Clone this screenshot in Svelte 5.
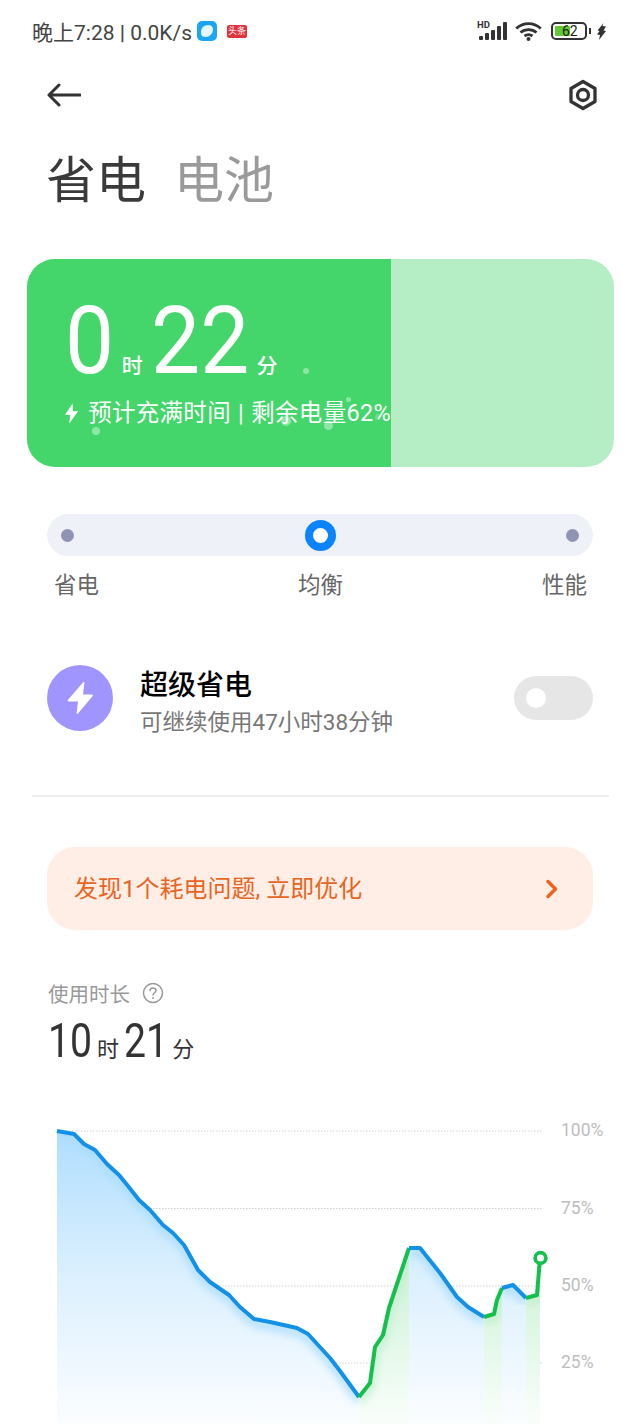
<script>
	const blue = '#1391e8';
	const green = '#14bf4c';

	// chart line pieces, in page coordinates
	const segments = [
		{ color: blue, pts: [[57,1131],[74,1134],[84,1144],[95,1150],[107,1164],[119,1175],[128,1186],[139,1200],[150,1210],[163,1225],[173,1233],[184,1245],[198,1270],[210,1282],[229,1295],[240,1307],[254,1319],[270,1322],[297,1328],[308,1334],[330,1358],[340,1371],[359,1397]] },
		{ color: green, pts: [[359,1397],[370,1383],[375,1347],[383,1335],[389,1308],[409,1248]] },
		{ color: blue, pts: [[409,1248],[420,1248],[440,1273],[457,1297],[468,1307],[484,1317]] },
		{ color: green, pts: [[484,1317],[494,1314],[497,1300],[502,1288]] },
		{ color: blue, pts: [[502,1288],[513,1285],[526,1298]] },
		{ color: green, pts: [[526,1298],[537,1295],[540,1258]] }
	];

	const bottom = 1424;
	const line = (pts) => pts.map((p) => p.join(',')).join(' ');
	const area = (pts) =>
		`${pts[0][0]},${bottom} ${line(pts)} ${pts[pts.length - 1][0]},${bottom}`;

	const grid = [
		{ y: 1131, label: '100%' },
		{ y: 1208.5, label: '75%' },
		{ y: 1286, label: '50%' },
		{ y: 1363, label: '25%' }
	];

	const bubbles = [
		{ x: 69, y: 172, r: 4, a: 0.4 },
		{ x: 279, y: 112, r: 3, a: 0.4 },
		{ x: 259, y: 162, r: 5, a: 0.4 },
		{ x: 301, y: 166, r: 4.5, a: 0.4 },
		{ x: 321, y: 140, r: 2.5, a: 0.4 },
		{ x: 351, y: 158, r: 3, a: 0.2 }
	];
</script>

<div class="page">
	<div class="status">
		<span class="clock">晚上7:28 <b>|</b> 0.0K/s</span>
		<svg class="app" width="20" height="20" viewBox="0 0 20 20">
			<rect width="20" height="20" rx="5" fill="#1aa5f5" />
			<path d="M11 4c3 0 5 1.500 5 4.500 0 4-3.500 7.500-7.500 7.500-1.200 0-2.500-.3-3.500-1-.8-1.200-1-2.500-1-4C4 7 7 4 11 4z" fill="#e6f6ff" />
		</svg>
		<span class="news">头条</span>
		<span class="grow"></span>
		<span class="signal">
			<span class="hd">HD</span>
			<svg width="29" height="18" viewBox="0 0 29 18">
				<rect x="1" y="14" width="4" height="4" rx="1" fill="#333" />
				<rect x="7" y="11" width="4" height="7" rx="1" fill="#333" />
				<rect x="13" y="8" width="4" height="10" rx="1" fill="#333" />
				<rect x="19" y="4" width="4" height="14" rx="1" fill="#333" />
				<rect x="25" y="0" width="4" height="18" rx="1" fill="#333" />
			</svg>
		</span>
		<svg class="wifi" width="27" height="19" viewBox="0 0 27 19" fill="none" stroke="#333" stroke-width="2.800">
			<path d="M1.200 6.500C8.500 0 18.500 0 25.800 6.500" />
			<path d="M5.500 10.500C10 6.700 17 6.700 21.500 10.500" />
			<path d="M9.500 14C12 12.300 15 12.300 17.500 14" />
			<circle cx="13.500" cy="17" r="2" fill="#333" stroke="none" />
		</svg>
		<span class="battery">
			<span class="level"></span>
			<span class="pct">62</span>
		</span>
		<span class="nub"></span>
		<svg class="charge" width="9" height="17" viewBox="0 0 9 17">
			<path d="M6.500 0 .5 7.500l2 .5L0 11.500l3 .5L2 17l7-9-2.500-.5L9 3.500 5.500 3z" fill="#333" />
		</svg>
	</div>

	<div class="nav">
		<svg width="34" height="24" viewBox="0 0 34 24" fill="none" stroke="#333" stroke-width="3" stroke-linecap="round" stroke-linejoin="round">
			<path d="M33 12H2M12 2 2 12l10 10" />
		</svg>
		<svg width="32" height="32" viewBox="0 0 32 32" fill="none" stroke="#333" stroke-width="3.300" stroke-linejoin="round">
			<path d="M16 2.500 28 9.500v13L16 29.500 4 22.500v-13z" />
			<circle cx="16" cy="16" r="5.500" />
		</svg>
	</div>

	<div class="tabs">
		<span class="tab on">省电</span>
		<span class="tab">电池</span>
	</div>

	<div class="card">
		<div class="fill">
			{#each bubbles as b}
				<span class="bubble" style="left:{b.x - b.r}px;top:{b.y - b.r}px;width:{b.r * 2}px;height:{b.r * 2}px;opacity:{b.a}"></span>
			{/each}
			<div class="time">
				<span class="big one">0</span><span class="unit">时</span><span class="big two">22</span><span class="unit">分</span>
			</div>
			<div class="estimate">
				<svg width="14" height="21" viewBox="0 0 14 21">
					<path d="M8 0 0 12h5.500L4.500 21 14 8H8.500z" fill="#fff" />
				</svg>
				<span>预计充满时间 | 剩余电量62%</span>
			</div>
		</div>
	</div>

	<div class="track">
		<span class="stop"></span>
		<span class="knob"></span>
		<span class="stop"></span>
	</div>
	<div class="modes">
		<span>省电</span>
		<span>均衡</span>
		<span>性能</span>
	</div>

	<div class="saver">
		<span class="badge">
			<svg width="28" height="34" viewBox="0 0 28 34">
				<path d="M17 1.500c.5-.8 1.500-.4 1.400.5L17 13.500h9c.8 0 1.200.8.700 1.500L12 32.500c-.5.700-1.500.3-1.400-.5l1.400-11.500H2.500c-.8 0-1.200-.8-.7-1.500z" fill="#fff" />
			</svg>
		</span>
		<div class="saver-text">
			<div class="saver-title">超级省电</div>
			<div class="saver-sub">可继续使用47小时38分钟</div>
		</div>
		<span class="toggle"><span class="dot"></span></span>
	</div>

	<div class="rule"></div>

	<div class="notice">
		<span>发现1个耗电问题, 立即优化</span>
		<svg width="14" height="20" viewBox="0 0 14 20" fill="none" stroke="#ea6419" stroke-width="3.500" stroke-linecap="round" stroke-linejoin="round">
			<path d="M3 2.500 10.500 10 3 17.500" />
		</svg>
	</div>

	<div class="usage-label">
		<span>使用时长</span>
		<svg width="22" height="22" viewBox="0 0 22 22" fill="none" stroke="#999" stroke-width="1.500">
			<circle cx="11" cy="11" r="9.500" />
			<path d="M8 8.700c0-1.700 1.300-2.800 3-2.800s3 1.100 3 2.600c0 2.200-3 2.300-3 4.500" stroke-linecap="round" />
			<circle cx="11" cy="16" r="1" fill="#999" stroke="none" />
		</svg>
	</div>
	<div class="usage">
		<span class="num">10</span><span class="u">时</span><span class="num gap">21</span><span class="u last">分</span>
	</div>

	<svg class="chart" width="641" height="309" viewBox="0 1115 641 309">
		<defs>
			<linearGradient id="blueFill" gradientUnits="userSpaceOnUse" x1="0" y1="1131" x2="0" y2="1424">
				<stop offset="0" stop-color="#b0defe" />
				<stop offset="0.5" stop-color="#dcf0fe" />
				<stop offset="1" stop-color="#fbfdff" />
			</linearGradient>
			<linearGradient id="greenFill" gradientUnits="userSpaceOnUse" x1="0" y1="1248" x2="0" y2="1424">
				<stop offset="0" stop-color="#c8f1d3" />
				<stop offset="1" stop-color="#fafefb" />
			</linearGradient>
			<filter id="soft" x="-20%" y="-20%" width="140%" height="140%">
				<feGaussianBlur stdDeviation="4" />
			</filter>
			{#each segments as s, i}
				<clipPath id="under{i}"><polygon points={area(s.pts)} /></clipPath>
			{/each}
		</defs>
		{#each grid as g}
			<line x1="57" x2="543" y1={g.y} y2={g.y} class="grid" />
			<text x="561" y={g.y + 5} class="axis">{g.label}</text>
		{/each}
		{#each segments as s, i}
			<polygon points={area(s.pts)} fill={s.color === blue ? 'url(#blueFill)' : 'url(#greenFill)'} />
			<g clip-path="url(#under{i})">
				<polyline points={line(s.pts)} fill="none" stroke={s.color === blue ? '#a9dcfd' : '#bdeecb'} stroke-width="7" filter="url(#soft)" transform="translate(0 4)" />
			</g>
		{/each}
		{#each segments as s}
			<polyline points={line(s.pts)} fill="none" stroke={s.color} stroke-width="4" stroke-linejoin="round" />
		{/each}
		<circle cx="540.500" cy="1258" r="5.400" fill="#fff" stroke={green} stroke-width="3.600" />
	</svg>
</div>

<style>
	:global(body) {
		margin: 0;
		background: #fff;
	}

	.page {
		position: relative;
		width: 641px;
		height: 1424px;
		overflow: hidden;
		font-family: Roboto, "Noto Sans CJK SC", sans-serif;
		color: #333;
	}

	.status {
		display: flex;
		align-items: center;
		height: 62px;
		padding: 0 35px 0 32px;
	}
	.clock {
		font-size: 21px;
		color: #444;
		white-space: nowrap;
	}
	.clock b {
		font-weight: 500;
	}
	.app {
		margin-left: 5px;
	}
	.news {
		margin-left: 10px;
		width: 20px;
		height: 13px;
		background: #e0343f;
		border-radius: 2px;
		color: #fff;
		font-size: 9px;
		line-height: 13px;
		text-align: center;
		white-space: nowrap;
	}
	.grow {
		flex: 1;
	}
	.signal {
		position: relative;
		display: flex;
	}
	.hd {
		position: absolute;
		left: -1px;
		top: -2px;
		font-size: 9.500px;
		font-weight: 700;
		line-height: 9px;
		color: #333;
	}
	.wifi {
		margin-left: 8px;
	}
	.battery {
		position: relative;
		box-sizing: border-box;
		width: 36px;
		height: 18px;
		margin-left: 9px;
		border: 2px solid #333;
		border-radius: 5px;
	}
	.level {
		position: absolute;
		left: 2px;
		top: 2px;
		bottom: 2px;
		width: 15px;
		background: #62c931;
		border-radius: 1px;
	}
	.pct {
		position: absolute;
		left: 9px;
		top: -1px;
		font-size: 14px;
		line-height: 16px;
		color: #222;
	}
	.nub {
		width: 2px;
		height: 6px;
		margin-left: 2px;
		background: #333;
	}
	.charge {
		margin-left: 6px;
	}

	.nav {
		display: flex;
		align-items: center;
		justify-content: space-between;
		height: 66px;
		padding: 0 42px 0 47px;
	}

	.tabs {
		display: flex;
		gap: 28px;
		height: 56px;
		padding: 0 0 0 46px;
		margin-top: 25px;
	}
	.tab {
		font-size: 50px;
		line-height: 56px;
		color: #9a9a9a;
	}
	.tab.on {
		color: #3a3a3a;
	}

	.card {
		height: 208px;
		margin: 50px 27px 0;
		background: #b5eec5;
		border-radius: 28px;
		overflow: hidden;
	}
	.fill {
		position: relative;
		box-sizing: border-box;
		width: 364px;
		height: 100%;
		padding: 34px 0 0 38px;
		background: #44d66b;
		color: #fff;
		white-space: nowrap;
	}
	.bubble {
		position: absolute;
		border-radius: 50%;
		background: #fff;
	}
	.time {
		display: flex;
		align-items: baseline;
		height: 96px;
		line-height: 96px;
	}
	/* the digits on the device are narrower than Roboto */
	.big {
		display: inline-block;
		font-size: 94px;
		transform: scaleX(0.93);
		transform-origin: left;
	}
	.one {
		margin-right: -3.7px;
	}
	.two {
		margin-left: 8px;
		margin-right: -7.4px;
	}
	.unit {
		font-size: 21px;
		font-weight: 500;
		margin-left: 7.5px;
	}
	.estimate {
		display: flex;
		align-items: center;
		gap: 10px;
		margin-top: 8px;
		font-size: 23.500px;
		line-height: 32px;
		letter-spacing: 0.3px;
		word-spacing: 1px;
	}

	.track {
		display: flex;
		align-items: center;
		justify-content: space-between;
		height: 42px;
		margin: 47px 48px 0 47px;
		padding: 0 14px;
		background: #eef1f7;
		border-radius: 21px;
	}
	.stop {
		width: 13px;
		height: 13px;
		border-radius: 50%;
		background: #8f93b5;
	}
	.knob {
		box-sizing: border-box;
		width: 31px;
		height: 31px;
		border: 8.500px solid #0d84ff;
		border-radius: 50%;
		background: #fff;
	}
	.modes {
		display: flex;
		justify-content: space-between;
		margin: 13px 54px 0;
		font-size: 22.500px;
		line-height: 32px;
		color: #666;
	}

	.saver {
		display: flex;
		align-items: center;
		height: 66px;
		margin: 64px 48px 0 47px;
	}
	.badge {
		display: flex;
		align-items: center;
		justify-content: center;
		width: 66px;
		height: 66px;
		border-radius: 50%;
		background: #a094ff;
	}
	.saver-text {
		flex: 1;
		margin-left: 27px;
		padding-top: 11px;
	}
	.saver-title {
		font-size: 28px;
		line-height: 36px;
		font-weight: 500;
		color: #000;
	}
	.saver-sub {
		font-size: 22.500px;
		line-height: 36px;
		color: #777;
	}
	.toggle {
		position: relative;
		width: 79px;
		height: 44px;
		border-radius: 22px;
		background: #e6e6e6;
	}
	.dot {
		position: absolute;
		left: 12px;
		top: 12px;
		width: 20px;
		height: 20px;
		border-radius: 50%;
		background: #fff;
	}

	.rule {
		height: 2px;
		margin: 64px 32px 0;
		background: #eee;
	}

	.notice {
		display: flex;
		align-items: center;
		justify-content: space-between;
		height: 83px;
		margin: 50px 48px 0 47px;
		padding: 0 34px 0 27px;
		background: #ffeee6;
		border-radius: 28px;
		font-size: 24px;
		line-height: 80px;
		color: #e8651f;
	}

	.usage-label {
		display: flex;
		align-items: center;
		gap: 12px;
		height: 30px;
		margin: 48px 48px 0;
		font-size: 20.500px;
		color: #999;
	}
	.usage {
		display: flex;
		align-items: baseline;
		height: 56px;
		margin: 5px 48px 0;
		line-height: 56px;
		color: #333;
	}
	.num {
		display: inline-block;
		font-size: 49px;
		transform: scaleX(0.8);
		transform-origin: left;
		margin-right: -11px;
	}
	.gap {
		margin-left: 5px;
	}
	.u {
		font-size: 22px;
		margin-left: 5px;
	}
	.last {
		margin-left: 4px;
	}

	.chart {
		position: absolute;
		left: 0;
		top: 1115px;
	}
	.grid {
		stroke: #cfcfcf;
		stroke-width: 1;
		stroke-dasharray: 1.500 1.500;
	}
	.axis {
		font-size: 17.500px;
		fill: #bdbdbd;
	}
</style>
